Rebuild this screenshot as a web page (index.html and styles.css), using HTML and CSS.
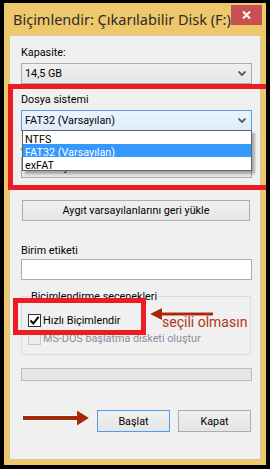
FILE: index.html
```html
<!DOCTYPE html>
<html lang="tr">
<head>
<meta charset="utf-8">
<title>Biçimlendir</title>
<link rel="stylesheet" href="styles.css">
</head>
<body>
<div class="window">
  <div class="titlebar">
    <span class="title">Biçimlendir: Çıkarılabilir Disk (F:)</span>
    <div class="close"><svg width="9" height="8" viewBox="0 0 9 8"><path d="M1 0.5 L8 7.5 M8 0.5 L1 7.5" stroke="#fff" stroke-width="2"/></svg></div>
  </div>
  <div class="panel">
    <div class="label">Kapasite:</div>
    <div class="combo"><span>14,5 GB</span><svg class="chev" width="8" height="5" viewBox="0 0 8 5"><path d="M0.5 0.5 L4 4 L7.5 0.5" fill="none" stroke="#5a5a5a" stroke-width="1.8"/></svg></div>
    <div class="label">Dosya sistemi</div>
    <div class="combo open"><span>FAT32 (Varsayılan)</span><svg class="chev" width="8" height="5" viewBox="0 0 8 5"><path d="M0.5 0.5 L4 4 L7.5 0.5" fill="none" stroke="#5a5a5a" stroke-width="1.8"/></svg>
      <ul class="droplist">
        <li>NTFS</li>
        <li class="sel">FAT32 (Varsayılan)</li>
        <li>exFAT</li>
      </ul>
    </div>
    <div class="label">Ayırma birimi boyutu</div>
    <div class="combo"><span>8192 bayt</span><svg class="chev" width="8" height="5" viewBox="0 0 8 5"><path d="M0.5 0.5 L4 4 L7.5 0.5" fill="none" stroke="#5a5a5a" stroke-width="1.8"/></svg></div>
    <div class="btn wide">Aygıt varsayılanlarını geri yükle</div>
    <div class="label label-vol">Birim etiketi</div>
    <div class="textbox"></div>
    <div class="group">
      <span class="legend">Biçimlendirme seçenekleri</span>
      <div class="check"><span class="box"><svg width="11" height="11" viewBox="0 0 11 11"><path d="M1.5 5.5 L4.3 8.5 L9.5 1.8" fill="none" stroke="#000" stroke-width="2"/></svg></span>Hızlı Biçimlendir</div>
      <div class="check disabled"><span class="box"></span>MS-DOS başlatma disketi oluştur</div>
    </div>
    <div class="progress"></div>
    <div class="actions">
      <div class="btn default">Başlat</div>
      <div class="btn">Kapat</div>
    </div>
  </div>
</div>
<div class="mark mark-fs"></div>
<div class="mark mark-quick"></div>
<svg class="arrow arrow-quick" width="66" height="16" viewBox="0 0 66 16"><path d="M1 8 L13 2 L13 6.5 L64 6.5 L64 9.5 L13 9.5 L13 14 Z" fill="#a52a0a" stroke="#fff" stroke-width="1.2" paint-order="stroke"/></svg>
<span class="note">seçili olmasın</span>
<svg class="arrow arrow-start" width="70" height="18" viewBox="0 0 70 18"><path d="M1 7 L55 7 L55 1.5 L67 9 L55 16.5 L55 11 L1 11 Z" fill="#a52a0a" stroke="#fff" stroke-width="1.5" paint-order="stroke"/></svg>
</body>
</html>
```

FILE: styles.css
```css
html, body {
  margin: 0;
  padding: 0;
}
body {
  width: 270px;
  height: 469px;
  background: #000;
  position: relative;
  overflow: hidden;
  font-family: Roboto, "Noto Sans", sans-serif;
  font-size: 10.8px;
  color: #000;
}
.window {
  position: absolute;
  left: 4px;
  top: 3px;
  width: 262px;
  height: 462px;
  background: #efc86b;
  display: flex;
  flex-direction: column;
}
.titlebar {
  height: 32px;
  display: flex;
  align-items: flex-start;
  justify-content: space-between;
}
.title {
  margin-left: 9px;
  margin-top: 6px;
  font-family: "Noto Sans", sans-serif;
  font-size: 14.5px;
  line-height: 20px;
  color: #2b2b2b;
  white-space: nowrap;
}
.close {
  width: 31px;
  height: 20px;
  margin-top: 2px;
  margin-right: 4px;
  background: #c75050;
  display: flex;
  align-items: center;
  justify-content: center;
}
.panel {
  margin: 0 5px;
  height: 425px;
  box-sizing: border-box;
  background: #f0f0f0;
  border: 1px solid #d6c6a0;
  padding: 9px 8px 0 11px;
  display: flex;
  flex-direction: column;
}
.label {
  line-height: 15px;
  height: 15px;
  white-space: nowrap;
}
.combo {
  position: relative;
  margin-top: 3px;
  height: 21px;
  box-sizing: border-box;
  border: 1px solid #acacac;
  background: linear-gradient(#f0f0f0, #e5e5e5);
  display: flex;
  align-items: center;
  justify-content: space-between;
  padding: 0 5px 0 3px;
  margin-bottom: 8px;
}
.combo span {
  line-height: 19px;
}
.combo.open {
  border-color: #569de5;
  background: linear-gradient(#ecf4fc, #dcecfc);
}
.chev {
  display: block;
}
.droplist {
  position: absolute;
  left: 0;
  right: -1px;
  top: 100%;
  margin: 0;
  padding: 0;
  list-style: none;
  background: #fff;
  border: 1px solid #646464;
  box-shadow: 3px 3px 2px rgba(0, 0, 0, 0.28);
  z-index: 2;
}
.droplist li {
  height: 13px;
  line-height: 17px;
  padding-left: 2px;
}
.droplist li.sel {
  background: #3399ff;
  color: #fff;
}
.btn {
  height: 21px;
  box-sizing: border-box;
  border: 1px solid #acacac;
  background: linear-gradient(#f0f0f0, #e5e5e5);
  display: flex;
  align-items: center;
  justify-content: center;
  white-space: nowrap;
}
.btn.wide {
  margin-top: 14px;
  margin-left: 1px;
  margin-right: 2px;
}
.label-vol {
  margin-top: 22px;
}
.textbox {
  margin-top: 1px;
  height: 21px;
  box-sizing: border-box;
  border: 1px solid #abadb3;
  background: #fff;
}
.group {
  margin-top: 16px;
  margin-right: 1px;
  border: 1px solid #dcdcdc;
  padding: 0 6px 8px 6px;
  display: flex;
  flex-direction: column;
  gap: 3px;
}
.legend {
  margin-top: -8px;
  margin-left: 2px;
  padding: 0 1px;
  align-self: flex-start;
  background: #f0f0f0;
  line-height: 15px;
  margin-bottom: 6px;
}
.check {
  display: flex;
  align-items: center;
  height: 15px;
  line-height: 15px;
  white-space: nowrap;
}
.box {
  width: 13px;
  height: 13px;
  box-sizing: border-box;
  border: 1px solid #333;
  background: #fff;
  margin-right: 2px;
  display: flex;
  align-items: center;
  justify-content: center;
}
.check.disabled {
  color: #8b8b9c;
}
.check.disabled .box {
  border-color: #c8c8c8;
  background: #ececec;
}
.progress {
  margin-top: 13px;
  height: 13px;
  box-sizing: border-box;
  border: 1px solid #bcbcbc;
  background: #e6e6e6;
}
.actions {
  margin-top: 29px;
  display: flex;
  justify-content: flex-end;
  gap: 8px;
  padding-right: 1px;
}
.actions .btn {
  width: 73px;
  height: 22px;
}
.btn.default {
  border-color: #4a9ff0;
}
.mark {
  position: absolute;
  box-sizing: border-box;
  border: 5px solid #ed1c24;
}
.mark-fs {
  left: 8px;
  top: 84px;
  width: 258px;
  height: 106px;
  border-right: none;
}
.mark-quick {
  left: 13px;
  top: 298px;
  width: 133px;
  height: 37px;
}
.arrow {
  position: absolute;
  display: block;
}
.arrow-quick {
  left: 149px;
  top: 306px;
}
.arrow-start {
  left: 22px;
  top: 409px;
}
.note {
  position: absolute;
  left: 162px;
  top: 313px;
  font-size: 14px;
  line-height: 18px;
  color: #b2361a;
  white-space: nowrap;
}
```
